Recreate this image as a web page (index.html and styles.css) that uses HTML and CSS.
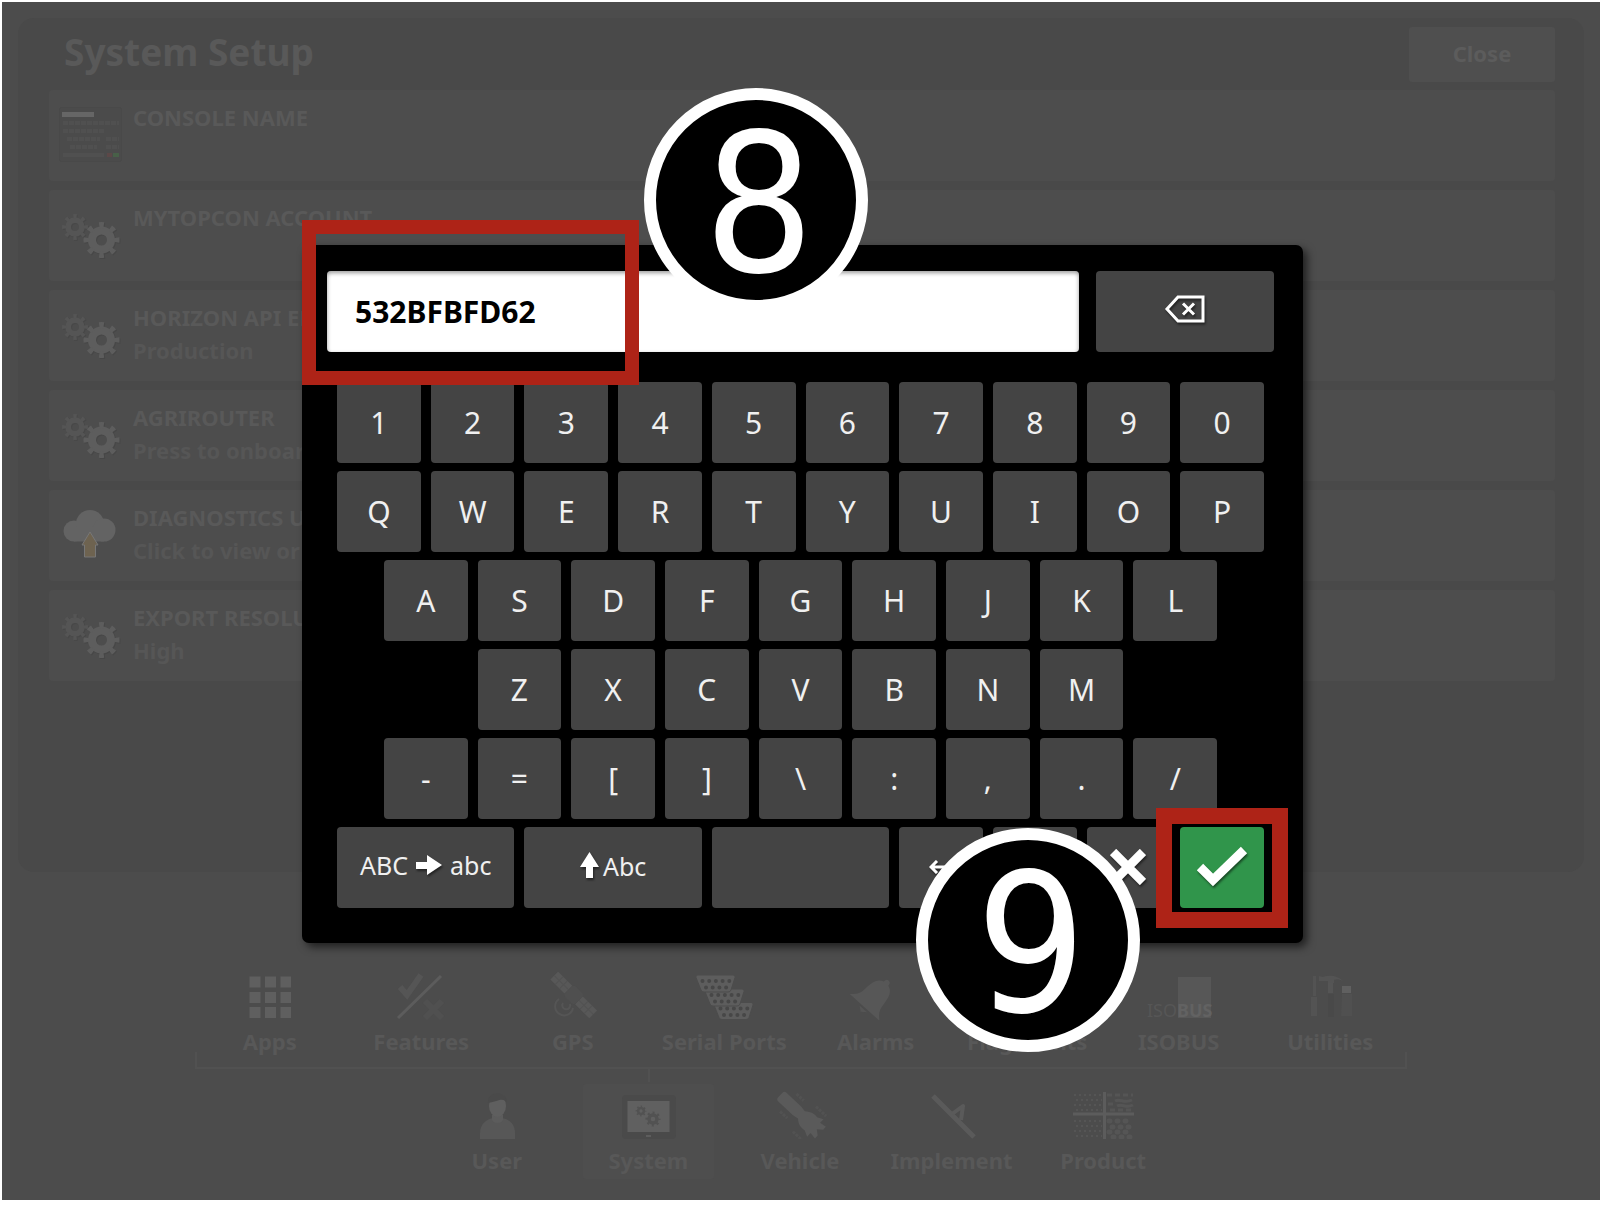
FILE: index.html
```html
<!DOCTYPE html>
<html lang="en">
<head>
<meta charset="utf-8">
<title>System Setup</title>
<meta name="viewport" content="width=device-width, initial-scale=1">
<link rel="stylesheet" href="styles.css">
</head>
<body>
<svg class="defs" aria-hidden="true">
  <defs>
    <g id="gear">
      <circle r="9.500" fill="none" stroke="currentColor" stroke-width="8"/>
      <circle r="15" fill="none" stroke="currentColor" stroke-width="6" pathLength="16" stroke-dasharray="0.8 1.2" stroke-dashoffset="0.4"/>
    </g>
    <symbol id="gears" viewBox="0 0 64 64">
      <g transform="translate(17 27)" color="#484848"><use href="#gear" transform="scale(.72)"/></g>
      <g transform="translate(43.500 40)" color="#474747"><use href="#gear"/></g>
      <g transform="translate(16 26)" color="#555"><use href="#gear" transform="scale(.72)"/></g>
      <g transform="translate(42.5 39)" color="#5d5d5d"><use href="#gear"/></g>
    </symbol>
    <g id="port">
      <path d="M2 0H37a2 2 0 0 1 2 2.500L35 15a3 3 0 0 1-3 2H8a3 3 0 0 1-3-2L0 2.500A2 2 0 0 1 2 0Z" fill="#5d5d5d" stroke="#4c4c4c"/>
      <path d="M6.500 6H34M10 12.500H31" stroke="#474747" stroke-width="4" stroke-linecap="round" stroke-dasharray="0 6.700"/>
    </g>
  </defs>
</svg>

<div class="screen">
  <main class="panel">
    <header class="panel-head">
      <h1>System Setup</h1>
      <button class="close" type="button">Close</button>
    </header>
    <ul class="settings">
      <li class="setting">
        <svg class="setting-icon" viewBox="0 0 64 64">
          <rect x=".5" y="6.500" width="62" height="54" rx="2" fill="#4b4b4b" stroke="#494949"/>
          <rect x="3" y="11" width="32" height="5" fill="#666"/>
          <g fill="none" stroke="#505050" stroke-width="4" stroke-dasharray="5 1">
            <path d="M4 22H60M4 30H45M8 38H41M47 38H60M11 46H38M47 46H60"/>
          </g>
          <path d="M4 54H45" stroke="#505050" stroke-width="4"/>
          <rect x="48" y="52" width="5" height="4" fill="#5c4848"/>
          <rect x="54" y="52" width="6" height="4" fill="#486048"/>
        </svg>
        <div class="setting-text"><h2>CONSOLE NAME</h2></div>
      </li>
      <li class="setting">
        <svg class="setting-icon"><use href="#gears"/></svg>
        <div class="setting-text"><h2>MYTOPCON ACCOUNT</h2></div>
      </li>
      <li class="setting">
        <svg class="setting-icon"><use href="#gears"/></svg>
        <div class="setting-text"><h2>HORIZON API ENVIRONMENT</h2><p>Production</p></div>
      </li>
      <li class="setting">
        <svg class="setting-icon"><use href="#gears"/></svg>
        <div class="setting-text"><h2>AGRIROUTER</h2><p>Press to onboard</p></div>
      </li>
      <li class="setting">
        <svg class="setting-icon" viewBox="0 0 64 64">
          <g fill="#636363"><circle cx="15" cy="30" r="10.500"/><circle cx="31" cy="23" r="14"/><circle cx="45" cy="29" r="11.500"/><path d="M15 26H45V40.500H15Z"/></g>
          <path d="M31 31L39 44H36.500V56H25.500V44H23Z" fill="#6e6350" stroke="#777"/>
        </svg>
        <div class="setting-text"><h2>DIAGNOSTICS UPLOAD</h2><p>Click to view or upload</p></div>
      </li>
      <li class="setting">
        <svg class="setting-icon"><use href="#gears"/></svg>
        <div class="setting-text"><h2>EXPORT RESOLUTION</h2><p>High</p></div>
      </li>
    </ul>
  </main>

  <nav class="dock" aria-label="Setup">
    <ul class="dock-row dock-sub">
      <li><a href="#apps">
        <svg class="dock-icon" viewBox="0 0 64 48"><path d="M11.500 10H53M11.500 25.500H53M11.500 40.500H53" stroke="#5f5f5f" stroke-width="11" stroke-dasharray="11 4.500"/></svg>
        Apps</a></li>
      <li><a href="#features">
        <svg class="dock-icon" viewBox="0 0 64 48" fill="none"><path d="M11 15l7 8L32 3" stroke="#555" stroke-width="6"/><path d="M9 46L52 4" stroke="#5c5c5c" stroke-width="3"/><path d="M36 29L53 46M53 29L36 46" stroke="#505050" stroke-width="6"/></svg>
        Features</a></li>
      <li><a href="#gps">
        <svg class="dock-icon" viewBox="0 0 64 48" fill="none"><g transform="rotate(45 32 23)"><rect x="5" y="17" width="20" height="11" fill="#585858"/><rect x="25" y="15" width="15" height="15" rx="4" fill="#4f4f4f"/><rect x="40" y="17" width="20" height="11" fill="#585858"/><path d="M5 22.500H25M12 17V28M18 17V28M40 22.500H60M47 17V28M53 17V28" stroke="#525252"/></g><path d="M22 31a4 4 0 1 0 7 1M18 27a9 9 0 1 0 14 9" stroke="#555" stroke-width="2"/></svg>
        GPS</a></li>
      <li><a href="#serial">
        <svg class="dock-icon" viewBox="0 0 64 48"><use href="#port" x="22" y="30.500"/><use href="#port" x="13" y="17"/><use href="#port" x="4" y="3"/></svg>
        Serial Ports</a></li>
      <li><a href="#alarms">
        <svg class="dock-icon" viewBox="0 0 64 48"><g transform="rotate(42 30 25)"><path d="M30 3c3 0 3 3 3 4c7 2 8 8 9 16c0 8 3 12 8 16H10c5-4 8-8 8-16c1-8 2-14 9-16c0-1 0-4 3-4Z" fill="#575757"/><path d="M25 41H35l-5 4Z" fill="#555"/></g></svg>
        Alarms</a></li>
      <li><a href="#flags">
        <svg class="dock-icon" viewBox="0 0 64 48"><path d="M20 4H23V46H20ZM23 6L46 14L23 24Z" fill="#5a5a5a"/></svg>
        Flag Points</a></li>
      <li><a href="#isobus">
        <svg class="dock-icon iso" viewBox="0 0 64 48"><rect x="31" y="5" width="33" height="41" fill="#575757"/><text x="0" y="45" fill="#565656">ISO</text><text x="30" y="45" fill="#626262" font-weight="700">BUS</text></svg>
        ISOBUS</a></li>
      <li><a href="#utilities">
        <svg class="dock-icon" viewBox="0 0 64 48"><path d="M15 4h3v20h-3ZM13 25h6v19h-6Z" fill="#535353"/><path d="M21 4l4 1c6-2 14-2 20 4c-4-2-7-2-9-1v3h-6V9l-9 0Z" fill="#545454"/><path d="M30 11h5v10h-5Z" fill="#555"/><path d="M30 22h6v23h-6Z" fill="#494949"/><path d="M44 14h9v7h-9Z" fill="#606060"/><path d="M44 22h10v22H43Z" fill="#505050"/></svg>
        Utilities</a></li>
    </ul>
    <div class="bracket"></div>
    <ul class="dock-row dock-main">
      <li><a href="#user">
        <svg class="dock-icon" viewBox="0 0 64 48"><path d="M15 48V42C15 33 22 28 28 27h9c7 1 13 6 13 15v6Z" fill="#575757"/><path d="M27 24h11v5a6 5 0 0 1-11 0Z" fill="#5c5c5c"/><ellipse cx="32.500" cy="15" rx="8.500" ry="11" fill="#5f5f5f"/><path d="M23 12C22 -1 42 -1 42 12C38 6 34 10 23 12Z" fill="#4a4a4a"/></svg>
        User</a></li>
      <li class="selected"><a href="#system" aria-current="page">
        <svg class="dock-icon" viewBox="0 0 64 48"><rect x="6" y="4" width="54" height="44" rx="4" fill="#4a4a4a"/><rect x="11.500" y="10" width="42" height="31" fill="#606060"/><g color="#525252"><use href="#gear" transform="translate(25 20) scale(.3)"/><use href="#gear" transform="translate(37 28) scale(.42)"/></g><path d="M30 45h5" stroke="#5d5d5d" stroke-width="2"/></svg>
        System</a></li>
      <li><a href="#vehicle">
        <svg class="dock-icon" viewBox="0 0 64 48"><g transform="rotate(43 32 24)"><path d="M4 20a3 3 0 0 1 3-3H27l6 1c5-4 10-5 13-4l6-3v5l7-1v4l-5 4l5 4v4l-7-1v5l-6-3c-5 1-9 0-13-4l-6 1H7a3 3 0 0 1-3-3Z" fill="#5a5a5a"/><path d="M15 11H25M15 35H25M38 7H52M38 41H52" stroke="#525252" stroke-width="3" stroke-dasharray="3 1"/></g></svg>
        Vehicle</a></li>
      <li><a href="#implement">
        <svg class="dock-icon" viewBox="0 0 64 48" fill="none" stroke="#5a5a5a"><path d="M13 5L54 46" stroke-width="5"/><path d="M32 23L43 15L41 29" stroke-width="4" stroke-linejoin="round"/></svg>
        Implement</a></li>
      <li><a href="#product">
        <svg class="dock-icon" viewBox="0 0 64 48" fill="none" stroke="#555"><path d="M3 4H31M5 9H31M3 14H31M5 19H31M3 30H31M5 35H31M3 40H31M5 45H31" stroke-width="2" stroke-dasharray="2 3"/><path d="M36 4H62M39 19H60M37 13H43" stroke-width="3" stroke-dasharray="5 3"/><path d="M44 10C49 7 53 13 61 9M46 15C51 12 55 18 62 14" stroke-width="3"/><path d="M38 30H62M41 36H62M38 41H62M42 46H62" stroke-width="5" stroke-linecap="round" stroke-dasharray="1 7"/><path d="M33.500 1V48M2 23H63" stroke="#5c5c5c" stroke-width="3"/></svg>
        Product</a></li>
    </ul>
  </nav>

  <div class="overlay">
    <section class="dialog" role="dialog" aria-label="Keyboard">
      <div class="entry">
        <input class="value" type="text" value="532BFBFD62" aria-label="Value">
        <button class="key backspace" type="button" aria-label="Backspace">
          <svg width="42" height="28" viewBox="0 0 42 28" fill="none" stroke="#fff"><path d="M3 14L14 2H39V26H14Z" stroke-width="3"/><path d="M19 8.500L30 19.500M30 8.500L19 19.500" stroke-width="3"/></svg>
        </button>
      </div>
      <div class="keypad">
        <div class="keys"><button class="key">1</button><button class="key">2</button><button class="key">3</button><button class="key">4</button><button class="key">5</button><button class="key">6</button><button class="key">7</button><button class="key">8</button><button class="key">9</button><button class="key">0</button></div>
        <div class="keys"><button class="key">Q</button><button class="key">W</button><button class="key">E</button><button class="key">R</button><button class="key">T</button><button class="key">Y</button><button class="key">U</button><button class="key">I</button><button class="key">O</button><button class="key">P</button></div>
        <div class="keys"><button class="key">A</button><button class="key">S</button><button class="key">D</button><button class="key">F</button><button class="key">G</button><button class="key">H</button><button class="key">J</button><button class="key">K</button><button class="key">L</button></div>
        <div class="keys"><button class="key">Z</button><button class="key">X</button><button class="key">C</button><button class="key">V</button><button class="key">B</button><button class="key">N</button><button class="key">M</button></div>
        <div class="keys"><button class="key">-</button><button class="key">=</button><button class="key">[</button><button class="key">]</button><button class="key">\</button><button class="key">:</button><button class="key">,</button><button class="key">.</button><button class="key">/</button></div>
        <div class="keys actions">
          <button class="key wide"><span>ABC</span><svg width="26" height="20" viewBox="0 0 26 20"><path d="M0 7H11V0L26 10L11 20V14H0Z" fill="#fff"/></svg><span>abc</span></button>
          <button class="key wide shift"><svg width="19" height="28" viewBox="0 0 19 28"><path d="M9.500 0L19 15H13V26H6V15H0Z" fill="#fff"/></svg><span>Abc</span></button>
          <button class="key wide" aria-label="Space"></button>
          <button class="key" aria-label="Left"><svg width="24" height="14" viewBox="0 0 24 14" fill="none" stroke="#fff" stroke-width="3"><path d="M24 7H2M8 1L2 7L8 13"/></svg></button>
          <button class="key" aria-label="Right"><svg width="24" height="14" viewBox="0 0 24 14" fill="none" stroke="#fff" stroke-width="3"><path d="M0 7H22M16 1L22 7L16 13"/></svg></button>
          <button class="key" aria-label="Cancel"><svg width="36" height="36" viewBox="0 0 36 36" fill="none" stroke="#fff" stroke-width="9"><path d="M3 3L33 33M33 3L3 33"/></svg></button>
          <button class="key ok" aria-label="Confirm"><svg width="52" height="42" viewBox="0 0 52 42" fill="none" stroke="#fff" stroke-width="9"><path d="M4 21L17 34L48 4"/></svg></button>
        </div>
      </div>
      <div class="frame frame-value"></div>
      <div class="frame frame-ok"></div>
      <div class="badge badge-value">8</div>
      <div class="badge badge-ok">9</div>
    </section>
  </div>
</div>
</body>
</html>
```
FILE: styles.css
```css
* { box-sizing: border-box; }

body {
  margin: 0;
  padding: 2px 0 7px 2px;
  min-height: 100vh;
  display: flex;
  background: #fff;
  font-family: "Noto Sans", "Open Sans", sans-serif;
  font-size: 22px;
}

h1, h2, p, ul { margin: 0; padding: 0; font-weight: 700; }
ul { list-style: none; }
button { border: 0; padding: 0; font: inherit; }
.defs { position: absolute; width: 0; height: 0; }

.screen {
  position: relative;
  flex: 1;
  display: flex;
  flex-direction: column;
  background: #4c4c4c;
  color: #595959;
}

/* Settings page */
.panel {
  flex: 1;
  margin: 16px 16px 0;
  padding: 9px 29px 30px 31px;
  border-radius: 16px;
  background: #494949;
}

.panel-head {
  display: flex;
  justify-content: space-between;
  align-items: flex-start;
  margin-bottom: 8px;
}

.panel-head h1 {
  padding-left: 15px;
  font-size: 37px;
  line-height: 50px;
}

.close {
  width: 146px;
  height: 55px;
  padding-bottom: 4px;
  border-radius: 3px;
  background: #4f4f4f;
  color: #5c5c5c;
  font-weight: 700;
}

.settings {
  display: flex;
  flex-direction: column;
  gap: 9px;
}

.setting {
  display: flex;
  gap: 10px;
  padding: 11px 10px 14px;
  border-radius: 4px;
  background: #4d4d4d;
}

.setting-icon { width: 64px; height: 64px; }

.setting-text {
  min-height: 66px;
  line-height: 33px;
}

.setting-text h2 { font-size: 22px; }
.setting-text p { color: #565656; }

/* Bottom navigation */
.dock { padding: 100px 0 21px; }

.dock-row {
  display: grid;
  margin: 0 auto;
  padding-right: 2px;
  text-align: center;
  line-height: 22px;
}

.dock-sub { grid-template-columns: repeat(8, 1fr); max-width: 1214px; }
.dock-main { grid-template-columns: repeat(5, 1fr); max-width: 760px; }

.dock-row a {
  display: flex;
  flex-direction: column;
  align-items: center;
  gap: 10px;
  color: #585858;
  font-weight: 700;
  text-decoration: none;
  white-space: nowrap;
}

.dock-icon { width: 64px; height: 48px; }
.iso { font-size: 18px; font-weight: 400; overflow: visible; }

.bracket {
  height: 17px;
  max-width: 1212px;
  margin: 0 auto;
  border: 2px solid #515151;
  border-top: 0;
}

.dock-main li {
  position: relative;
  padding: 15px 10px 0;
}

.dock-main a {
  padding: 7px 0 8px;
  border-radius: 3px;
}

.selected a { background: #4e4e4e; }

.selected::before {
  content: "";
  position: absolute;
  top: 0;
  left: 50%;
  width: 2px;
  height: 13px;
  background: #515151;
}

/* Keyboard dialog */
.overlay {
  position: absolute;
  inset: 0;
  display: flex;
  align-items: center;
  justify-content: center;
  padding: 0 0 14px 3px;
}

.dialog {
  position: relative;
  width: 1001px;
  padding: 26px 29px 35px 25px;
  border-radius: 7px;
  background: #000;
  box-shadow: 4px 4px 8px rgba(0, 0, 0, .6);
}

.entry {
  display: flex;
  gap: 17px;
  margin-bottom: 30px;
}

.value {
  flex: 1;
  min-width: 0;
  padding: 0 28px;
  border: 0;
  border-radius: 4px;
  background: #fff;
  box-shadow: inset 0 2px 4px rgba(0, 0, 0, .4);
  color: #000;
  font: 700 30px "Noto Sans", "Open Sans", sans-serif;
}

.keypad {
  display: flex;
  flex-direction: column;
  gap: 8px;
  padding: 0 10px;
}

.keys {
  display: flex;
  justify-content: center;
  gap: 10px;
}

.key {
  display: flex;
  align-items: center;
  justify-content: center;
  width: calc((100% - 90px) / 10);
  height: 81px;
  border-radius: 4px;
  background: #444;
  color: #f0f0f0;
  font-size: 30px;
}

.key svg { filter: drop-shadow(1px 2px 1px rgba(0, 0, 0, .5)); }

.key.backspace { width: 178px; padding-bottom: 6px; }

.actions .key { padding-bottom: 2px; }

.actions .wide {
  width: calc((100% - 90px) / 5 + 10px);
  gap: 8px;
  padding-bottom: 6px;
  font-size: 25px;
}

.actions .shift { gap: 4px; padding-bottom: 4px; }
.key.ok { background: #30954b; }

/* Step callouts */
.frame {
  position: absolute;
  border: 14px solid #ae2317;
}

.frame-value { left: 0; top: -25px; width: 337px; height: 165px; }
.frame-ok { left: 854px; top: 563px; width: 132px; height: 120px; border-width: 16px; }

.badge {
  position: absolute;
  width: 224px;
  height: 224px;
  padding-left: 6px;
  border: 12px solid #fff;
  border-radius: 50%;
  background: #000;
  color: #fff;
  font-family: "DejaVu Sans Condensed", "DejaVu Sans", sans-serif;
  font-size: 193px;
  line-height: 209px;
  text-align: center;
}

.badge-value { left: 342px; top: -157px; }
.badge-ok { left: 614px; top: 583px; }
```
